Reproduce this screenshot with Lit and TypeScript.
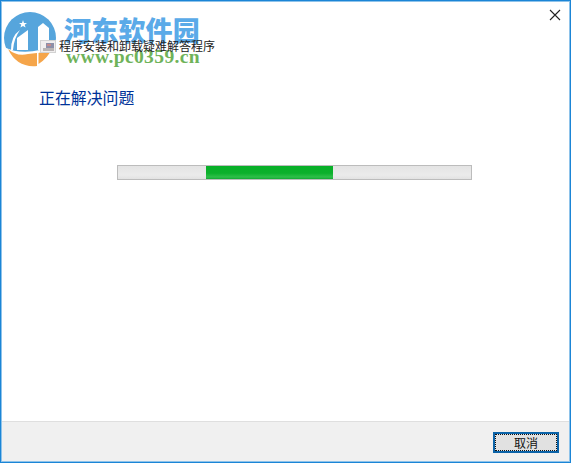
import { LitElement, html, css } from "lit";
import { customElement } from "lit/decorators.js";

@customElement("app-root")
export class AppRoot extends LitElement {
  static styles = css`
    :host {
      display: block;
      width: 571px;
      height: 463px;
      font-family: "Noto Sans CJK SC", "Liberation Sans", sans-serif;
    }
    .window {
      position: relative;
      box-sizing: border-box;
      width: 571px;
      height: 463px;
      background: #fff;
      border: 1px solid #1b85d6;
      display: flex;
      flex-direction: column;
      overflow: hidden;
    }
    .edge {
      position: absolute;
      inset: 0;
      box-shadow: inset 1px 1px 0 #8ec3ea, inset -1px -1px 0 #8ec3ea;
      pointer-events: none;
    }
    .close {
      position: absolute;
      top: 8px;
      right: 9px;
      width: 12px;
      height: 12px;
      display: block;
    }
    .main {
      flex: 1;
      display: flex;
      flex-direction: column;
      padding: 37px 0 0 38px;
    }
    .title {
      position: relative;
      z-index: 2;
      display: flex;
      align-items: center;
      gap: 3px;
      height: 16px;
      padding-left: 1px;
      font-size: 12px;
      line-height: 16px;
      color: #222;
    }
    .app-icon {
      width: 16px;
      height: 16px;
      display: block;
    }
    .heading {
      margin: 33px 0 0;
      font-size: 15.9px;
      line-height: 22px;
      font-weight: 400;
      color: #003399;
    }
    .track {
      box-sizing: border-box;
      margin: 56px 0 0 78px;
      width: 355px;
      height: 15px;
      background: linear-gradient(#e4e4e4, #ebebeb 70%, #e2e2e2);
      border: 1px solid #bcbcbc;
      padding-left: 88px;
    }
    .fill {
      width: 127px;
      height: 13px;
      background: linear-gradient(#07b027, #0cb02c 55%, #2fbf4a 85%, #12a832);
    }
    .footer {
      box-sizing: border-box;
      height: 41px;
      background: #f0f0f0;
      border-top: 1px solid #dfdfdf;
      display: flex;
      justify-content: flex-end;
      align-items: flex-start;
      padding: 10px 11px 0 0;
    }
    .cancel {
      box-sizing: border-box;
      width: 66px;
      height: 21px;
      padding: 0;
      border: 2px solid #0b63a8;
      background: #e1e1e1;
      outline: 1px dotted #111;
      outline-offset: -3px;
      font: 12px/15px "Noto Sans CJK SC", sans-serif;
      color: #111;
    }
    .mark {
      position: absolute;
      left: 3px;
      top: 10px;
      width: 56px;
      height: 56px;
      display: block;
    }
    .brand {
      position: absolute;
      left: 63px;
      top: 12px;
      font: 900 27px/34px "Noto Sans CJK SC", sans-serif;
      color: #5aaae8;
      letter-spacing: 0.2px;
      white-space: nowrap;
    }
    .url {
      position: absolute;
      left: 65px;
      top: 45px;
      font: 700 19.6px/22px "Liberation Serif", serif;
      color: #6fb35a;
      letter-spacing: 0.35px;
      white-space: nowrap;
    }
  `;

  render() {
    return html`
      <div class="window">
        <div class="main">
          <div class="title">
            <svg class="app-icon" viewBox="0 0 16 16">
              <rect x="0.5" y="2.5" width="15" height="12" fill="#f0eeee" stroke="#d2d2d2" />
              <rect x="6" y="5" width="8" height="5" fill="#8d8fa8" />
              <rect x="3" y="10" width="11" height="3" fill="#b9b4b4" />
              <rect x="7" y="6" width="4" height="2" fill="#c58a8a" />
            </svg>
            <span>程序安装和卸载疑难解答程序</span>
          </div>
          <h1 class="heading">正在解决问题</h1>
          <div class="track"><div class="fill"></div></div>
        </div>
        <div class="footer">
          <button class="cancel">取消</button>
        </div>

        <svg class="close" viewBox="0 0 12 12">
          <path d="M1 1 L11 11 M11 1 L1 11" stroke="#222" stroke-width="1.1" fill="none" />
        </svg>

        <svg class="mark" viewBox="4 11 56 56">
          <circle cx="30" cy="38" r="26" fill="#56a5dc" />
          <path d="M4 47 Q26 58 57 44 L60 70 L4 70 Z" fill="#fff" />
          <path d="M8 49 Q17 57 28 54 L37 53 L37 66 Q17 68 8 49 Z" fill="#f5a54a" />
          <path d="M38.5 53 L48 50 L53 47 Q48 58 38.5 64 Z" fill="#f5a54a" />
          <path d="M17 38 L28 30 L28 50 L17 50 Z" fill="#fff" />
          <path d="M38 27 L43 23 L49 28 L49 50 L38 50 Z" fill="#fff" />
          <path d="M11 50 Q11 36 20 30 Q14 38 13 50 Z" fill="#fff" />
          <path d="M23 20 L24 23 L27 23 L24.7 24.8 L25.6 27.6 L23 26 L20.4 27.6 L21.3 24.8 L19 23 L22 23 Z" fill="#fff" />
        </svg>
        <div class="brand">河东软件园</div>
        <div class="url">www.pc0359.cn</div>
        <div class="edge"></div>
      </div>
    `;
  }
}
